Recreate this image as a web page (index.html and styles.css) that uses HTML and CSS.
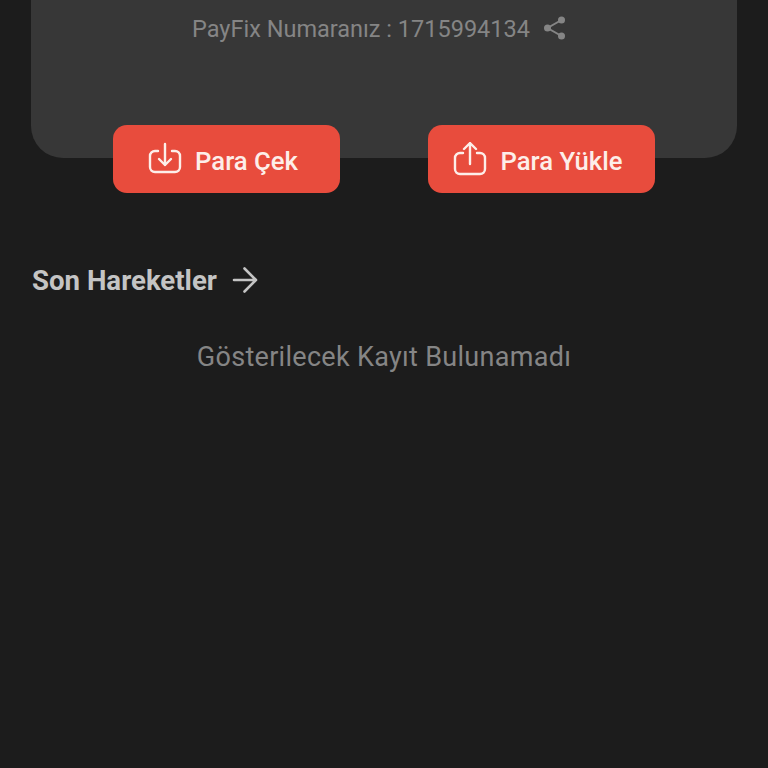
FILE: index.html
```html
<!DOCTYPE html>
<html>

<head>
  <meta charset="utf-8">
  <meta name="viewport" content="width=device-width, initial-scale=1">
  <title>PayFix</title>
  <link rel="stylesheet" href="styles.css">
</head>

<body>
  <div class="card">
    <span class="number">PayFix Numaranız : 1715994134</span>
    <svg class="share-icon" viewBox="0 0 24 24" width="24" height="24">
      <path d="M18.500 4 4.500 12l14 8" fill="none" stroke="#858585" stroke-width="2"/>
      <circle cx="18.500" cy="4" r="3.500" fill="#858585"/>
      <circle cx="4.500" cy="12" r="3.500" fill="#858585"/>
      <circle cx="18.500" cy="20" r="3.500" fill="#858585"/>
    </svg>
  </div>

  <div class="buttons">
    <button class="action-button">
      <svg viewBox="0 0 34 34" width="34" height="34" fill="none" stroke="#fdeee9" stroke-width="2.400" stroke-linecap="round" stroke-linejoin="round">
        <path d="M10 9H7a5 5 0 0 0-5 5v11a5 5 0 0 0 5 5h20a5 5 0 0 0 5-5V14a5 5 0 0 0-5-5h-3"/>
        <path d="M17 2v21M11 17l6 6 6-6"/>
      </svg>
      <span class="button-label">Para Çek</span>
    </button>
    <button class="action-button">
      <svg viewBox="0 0 34 34" width="34" height="34" fill="none" stroke="#fdeee9" stroke-width="2.400" stroke-linecap="round" stroke-linejoin="round">
        <path d="M10 11H7a5 5 0 0 0-5 5v11a5 5 0 0 0 5 5h20a5 5 0 0 0 5-5V16a5 5 0 0 0-5-5h-3"/>
        <path d="M17 22V1M11 7l6-6 6 6"/>
      </svg>
      <span class="button-label">Para Yükle</span>
    </button>
  </div>

  <div class="section-title">
    <span>Son Hareketler</span>
    <svg viewBox="0 0 26 26" width="26" height="26" fill="none" stroke="#c4c4c4" stroke-width="2.600" stroke-linecap="round" stroke-linejoin="round">
      <path d="M2 13h22M12.500 1.500 24 13 12.500 24.500"/>
    </svg>
  </div>

  <p class="empty">Gösterilecek Kayıt Bulunamadı</p>
</body>

</html>
```

FILE: styles.css
```css
* {
  margin: 0;
  padding: 0;
  box-sizing: border-box;
}

body {
  font-family: Roboto, 'Liberation Sans', sans-serif;
  background: #1c1c1c;
  color: #858585;
  height: 768px;
  overflow: hidden;
}

.card {
  height: 158px;
  margin: 0 31px;
  padding: 14px 9px 0 0;
  background: #373737;
  border-radius: 0 0 32px 32px;
  display: flex;
  justify-content: center;
  align-items: flex-start;
  gap: 13px;
}

.number {
  font-size: 23.500px;
  line-height: 30px;
}

.share-icon {
  margin-top: 2px;
}

.buttons {
  display: flex;
  justify-content: center;
  gap: 88px;
  margin-top: -33px;
}

.action-button {
  width: 227px;
  height: 68px;
  padding-right: 7px;
  background: #e84c3d;
  color: #fdeee9;
  border: none;
  border-radius: 14px;
  font-family: inherit;
  font-size: 25.700px;
  font-weight: 500;
  display: flex;
  align-items: center;
  justify-content: center;
  gap: 13px;
}

.button-label {
  padding-top: 3px;
}

.section-title {
  display: flex;
  align-items: center;
  gap: 15px;
  margin: 70px 0 0 32px;
  height: 34px;
  font-size: 27.600px;
  font-weight: 700;
  color: #c4c4c4;
}

.empty {
  margin-top: 44px;
  text-align: center;
  font-size: 27px;
  line-height: 32px;
  letter-spacing: 0.300px;
}
```
